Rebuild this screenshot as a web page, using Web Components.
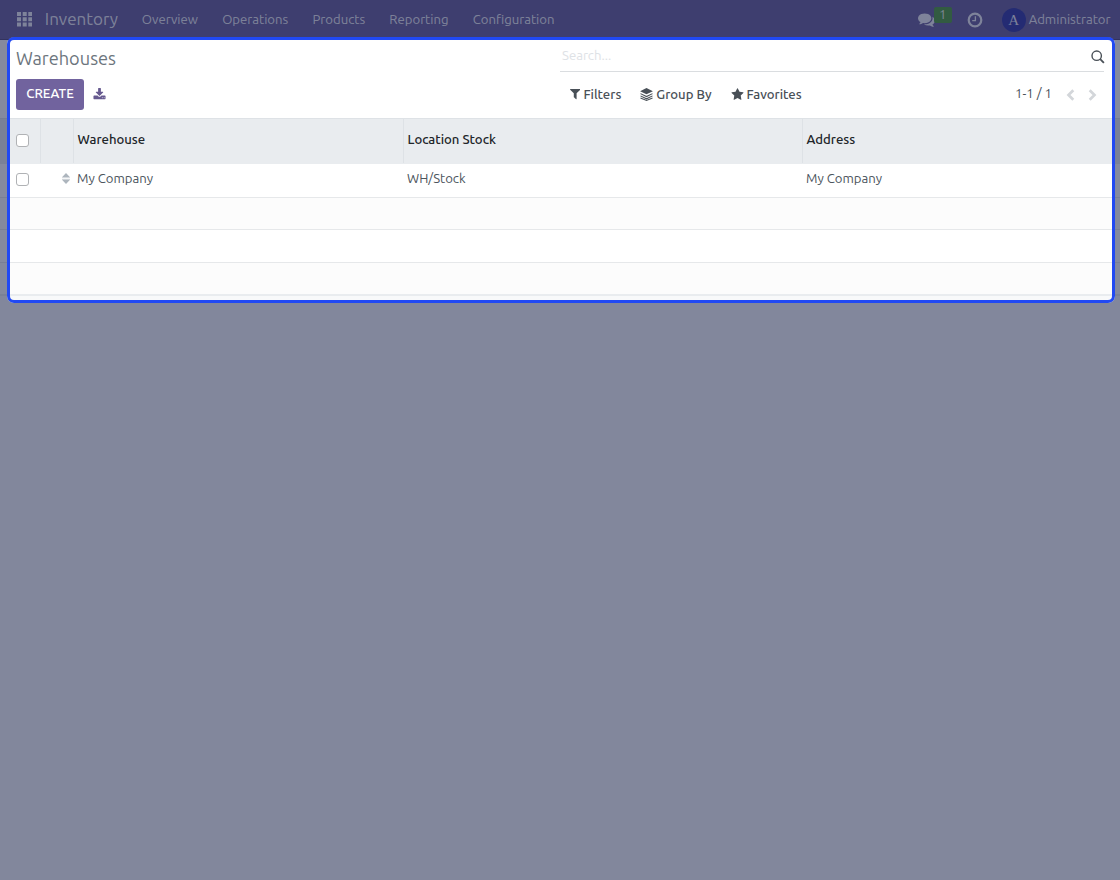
<!DOCTYPE html>
<html lang="en">
<head>
<meta charset="utf-8">
<title>Warehouses</title>
<style>
    body {
        margin: 0;
        height: 880px;
        overflow: hidden;
        background: #f8f9fa;
        color: #4c555d;
        font: 13.15px/20px Ubuntu, "Noto Sans", sans-serif;
    }
</style>
</head>
<body>
<inventory-app></inventory-app>

<script>
const icons = {
    th: '<path d="M0 0h4v4H0zM5.7 0h4v4h-4zM11.3 0h4v4h-4zM0 5.3h4v4H0zM5.7 5.3h4v4h-4zM11.3 5.3h4v4h-4zM0 10.6h4v4H0zM5.7 10.6h4v4h-4zM11.3 10.6h4v4h-4z"/>',
    comments: '<path d="M1408 768q0 139-94 257t-256.5 186.5-353.5 68.5q-86 0-176-16-124 88-278 128-36 9-86 16h-3q-11 0-20.5-8t-11.5-21q-1-3-1-6.5t.5-6.5 2-6l2.500-5 3.500-5.500 4-5 4.500-5 4-4.500q5-6 23-25t26-29.500 22.500-29 25-38.500 20.500-44q-124-72-195-177t-71-224q0-139 94-257t256.500-186.500 353.500-68.500 353.500 68.500 256.500 186.500 94 257zm384 256q0 120-71 224.500t-195 176.500q10 24 20.500 44t25 38.500 22.500 29 26 29.500 23 25q1 1 4 4.500t4.500 5 4 5 3.500 5.500l2.500 5 2 6 .5 6.500-1 6.500q-3 14-13 22t-22 7q-50-7-86-16-154-40-278-128-90 16-176 16-271 0-472-132 58 4 88 4 161 0 309-45t264-129q125-92 192-212t67-254q0-77-23-152 129 71 204 178t75 230z"/>',
    clock: '<g fill="none" stroke="currentColor"><circle cx="8" cy="8" r="6.300" stroke-width="2.200"/><path d="M8.400 4.300v4.300H5.200" stroke-width="1.300"/></g>',
    search: '<g fill="none" stroke="currentColor" stroke-width="1.400"><circle cx="5.700" cy="5.700" r="4.700"/><path d="M9.200 9.200l3.700 3.700" stroke-width="1.800"/></g>',
    download: '<path d="M1344 1344q0-26-19-45t-45-19-45 19-19 45 19 45 45 19 45-19 19-45zm256 0q0-26-19-45t-45-19-45 19-19 45 19 45 45 19 45-19 19-45zm128-224v320q0 40-28 68t-68 28h-1472q-40 0-68-28t-28-68v-320q0-40 28-68t68-28h465l135 136q58 56 136 56t136-56l136-136h464q40 0 68 28t28 68zm-325-569q17 41-14 70l-448 448q-18 19-45 19t-45-19l-448-448q-31-29-14-70 17-39 59-39h256v-448q0-26 19-45t45-19h256q26 0 45 19t19 45v448h256q42 0 59 39z"/>',
    filter: '<path d="M1595 295q17 41-14 70l-493 493v742q0 42-39 59-13 5-25 5-27 0-45-19l-256-256q-19-19-19-45v-486l-493-493q-31-29-14-70 17-39 59-39h1280q42 0 59 39z"/>',
    layers: '<path d="M6.500 0L13 3.200 6.500 6.400 0 3.200z"/><path d="M.4 5.700l6.100 3 6.100-3M.4 8l6.100 3 6.100-3M.4 10.100l6.100 2.500 6.100-2.500" fill="none" stroke="currentColor" stroke-width="1.100"/>',
    star: '<path d="M1728 647q0 22-26 48l-363 354 86 500q1 7 1 20 0 21-10.500 35.500t-30.500 14.500q-19 0-40-12l-449-236-449 236q-22 12-40 12-21 0-31.500-14.500t-10.500-35.500q0-6 2-20l86-500-364-354q-25-27-25-48 0-37 56-46l502-73 225-455q19-41 49-41t49 41l225 455 502 73q56 9 56 46z"/>',
    left: '<path d="M7.300 1.200L2.500 6l4.800 4.800" fill="none" stroke="currentColor" stroke-width="2.700"/>',
    right: '<path d="M1.700 1.200L6.500 6l-4.800 4.800" fill="none" stroke="currentColor" stroke-width="2.700"/>',
    sort: '<path d="M0 4.200L4 0l4 4.200zM0 6.800h8l-4 4.200z"/><path d="M0 4.200h8v1H0zM0 5.900h8v1H0z" opacity=".45"/>'
};

class UiIcon extends HTMLElement {
    constructor() {
        super();
        this.attachShadow({ mode: 'open' });
    }
    connectedCallback() {
        const box = this.getAttribute('box') || '0 0 1792 1792';
        const w = this.getAttribute('w') || 13;
        const h = this.getAttribute('h') || w;
        this.shadowRoot.innerHTML = `
        <style>
            :host { display: block; flex: none; }
            svg { display: block; fill: currentColor; }
        </style>
        <svg width="${w}" height="${h}" viewBox="${box}">${icons[this.getAttribute('name')]}</svg>`;
    }
}
customElements.define('ui-icon', UiIcon);

class MainNav extends HTMLElement {
    constructor() {
        super();
        this.attachShadow({ mode: 'open' });
        this.shadowRoot.innerHTML = `
        <style>
            :host {
                display: flex;
                align-items: center;
                box-sizing: border-box;
                height: 40px;
                padding: 0 9.500px 0 17px;
                background: #7066a0;
                border-bottom: 1px solid #5a4f7f;
                color: rgba(255, 255, 255, .9);
            }
            .brand { width: 73px; font-size: 17.060px; margin: 0 24px 1px 12.500px; }
            .menu { display: flex; gap: 24.200px; flex: 1; margin-bottom: 1px; }
            .tray { display: flex; align-items: center; }
            .badge {
                width: 18px;
                height: 16px;
                margin: 0 15px 9px -1px;
                border-radius: 2px;
                background: #57a043;
                font-size: 13px;
                line-height: 15px;
                text-align: center;
            }
            .avatar {
                width: 24px;
                height: 24px;
                margin: 0 3px 0 19px;
                border-radius: 50%;
                background: #3b40a8;
                font: 15px/24px "Liberation Serif", serif;
                text-align: center;
            }
            .user { margin-bottom: 1px; }
        </style>
        <ui-icon name="th" box="0 0 15.3 14.6" w="15.3" h="14.6"></ui-icon>
        <div class="brand">Inventory</div>
        <div class="menu">
            <span>Overview</span>
            <span>Operations</span>
            <span>Products</span>
            <span>Reporting</span>
            <span>Configuration</span>
        </div>
        <div class="tray">
            <ui-icon name="comments" w="17"></ui-icon>
            <div class="badge">1</div>
            <ui-icon name="clock" box="0 0 16 16" w="16"></ui-icon>
            <div class="avatar">A</div>
            <span class="user">Administrator</span>
        </div>`;
    }
}
customElements.define('main-nav', MainNav);

class ControlPanel extends HTMLElement {
    constructor() {
        super();
        this.attachShadow({ mode: 'open' });
        this.shadowRoot.innerHTML = `
        <style>
            :host {
                display: grid;
                grid-template-columns: 544px 544px;
                grid-template-rows: 32px 46px;
                box-sizing: border-box;
                height: 78px;
                padding: 0 16px;
                background: #fff;
            }
            .title { font-size: 18.200px; line-height: 36px; color: #6c757d; }
            .search {
                display: flex;
                justify-content: space-between;
                box-sizing: border-box;
                height: 32px;
                padding: 5px 0 0 2px;
                border-bottom: 1px solid #dadde0;
                color: #dee2e6;
            }
            .search ui-icon { color: #495057; margin: 5px -1px 0 0; }
            .actions { display: flex; align-items: center; gap: 9px; }
            button {
                width: 68px;
                height: 31px;
                padding: 0 0 2px;
                margin-bottom: 2px;
                border: 0;
                border-radius: 3px;
                background: #71639e;
                color: #fff;
                font: 500 13.200px/20px Ubuntu, "Noto Sans", sans-serif;
            }
            .actions ui-icon { color: #66598f; margin-bottom: 2px; }
            .tools { display: flex; align-items: center; padding: 0 7px 2px 10px; }
            .filters { display: flex; gap: 19px; flex: 1; font-weight: 500; color: #495057; }
            .filters div { display: flex; align-items: center; gap: 3px; }
            .pager { display: flex; align-items: center; color: #495057; }
            .pager span { margin-bottom: 2px; }
            .pager ui-icon { color: #d3d6da; margin-top: 1px; }
        </style>
        <div class="title">Warehouses</div>
        <div class="search">
            <span>Search...</span>
            <ui-icon name="search" box="0 0 14 14" w="14"></ui-icon>
        </div>
        <div class="actions">
            <button>CREATE</button>
            <ui-icon name="download"></ui-icon>
        </div>
        <div class="tools">
            <div class="filters">
                <div><ui-icon name="filter" box="192 0 1408 1792" w="10.4" h="13.2"></ui-icon><span>Filters</span></div>
                <div><ui-icon name="layers" box="0 0 13 13.2"></ui-icon><span>Group By</span></div>
                <div><ui-icon name="star"></ui-icon><span>Favorites</span></div>
            </div>
            <div class="pager">
                <span>1-1 / 1</span>
                <ui-icon name="left" box="0 0 9 12" w="9" h="12" style="margin-left: 14px"></ui-icon>
                <ui-icon name="right" box="0 0 9 12" w="9" h="12" style="margin-left: 13px"></ui-icon>
            </div>
        </div>`;
    }
}
customElements.define('control-panel', ControlPanel);

class CheckBox extends HTMLElement {
    constructor() {
        super();
        this.attachShadow({ mode: 'open' });
        this.shadowRoot.innerHTML = `
        <style>
            :host {
                display: block;
                box-sizing: border-box;
                width: 13px;
                height: 13px;
                border: 1px solid #b0b2b5;
                border-radius: 3px;
                background: #fff;
            }
        </style>`;
    }
}
customElements.define('check-box', CheckBox);

class ListView extends HTMLElement {
    constructor() {
        super();
        this.attachShadow({ mode: 'open' });
        this.shadowRoot.innerHTML = `
        <style>
            :host { display: block; border-top: 1px solid #dee2e6; background: #fff; }
            .row {
                display: grid;
                grid-template-columns: 41px 33px 330px 399px 1fr;
                box-sizing: border-box;
                height: 33px;
                border-bottom: 1px solid #e6e8ea;
            }
            .head {
                height: 45px;
                border: 0;
                background: #e9ecef;
                color: #212529;
                font-weight: 500;
            }
            .head > div { height: 44px; box-sizing: border-box; border-right: 1px solid #dee2e6; padding: 10px 0 0 3.500px; }
            .head > div:last-child { border: 0; }
            .head > .pick { padding: 15px 0 0 16px; }
            .data { height: 34px; }
            .data > div { padding: 4px 0 0 3px; }
            .data > .pick { padding: 9px 0 0 16px; }
            .data > .handle { padding: 9px 0 0 20.700px; color: #adb5bd; }
            .even { background: #fcfcfc; }
            .r1 { height: 32px; }
            .last { border-bottom: 2px solid #e9ecef; }
        </style>
        <div class="row head">
            <div class="pick"><check-box></check-box></div>
            <div></div>
            <div>Warehouse</div>
            <div>Location Stock</div>
            <div>Address</div>
        </div>
        <div class="row data">
            <div class="pick"><check-box></check-box></div>
            <div class="handle"><ui-icon name="sort" box="0 0 8 11" w="8" h="11"></ui-icon></div>
            <div>My Company</div>
            <div>WH/Stock</div>
            <div>My Company</div>
        </div>
        <div class="row even r1"></div>
        <div class="row"></div>
        <div class="row even last"></div>`;
    }
}
customElements.define('list-view', ListView);

// Frame around the active area, its shadow dims the rest of the page
class SpotLight extends HTMLElement {
    constructor() {
        super();
        this.attachShadow({ mode: 'open' });
        this.shadowRoot.innerHTML = `
        <style>
            :host {
                position: absolute;
                left: 7px;
                top: 37px;
                box-sizing: border-box;
                width: 1108px;
                height: 266px;
                border: 3px solid #2149f3;
                border-radius: 7px;
                box-shadow: 0 0 0 1200px rgba(13, 23, 63, .505);
                pointer-events: none;
            }
        </style>`;
    }
}
customElements.define('spot-light', SpotLight);

class InventoryApp extends HTMLElement {
    constructor() {
        super();
        this.attachShadow({ mode: 'open' });
        this.shadowRoot.innerHTML = `
        <style>
            :host { display: block; position: relative; height: 880px; overflow: hidden; }
        </style>
        <main-nav></main-nav>
        <control-panel></control-panel>
        <list-view></list-view>
        <spot-light></spot-light>`;
    }
}
customElements.define('inventory-app', InventoryApp);
</script>
</body>
</html>
